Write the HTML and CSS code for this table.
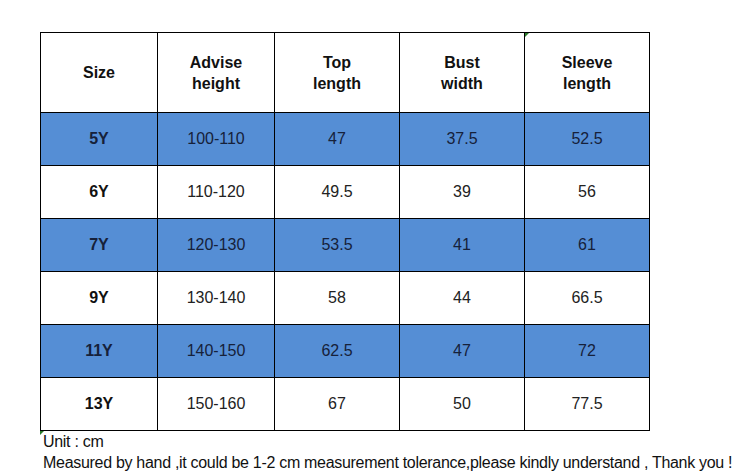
FILE: index.html
```html
<!DOCTYPE html>
<html>
<head>
<meta charset="utf-8">
<link rel="stylesheet" href="styles.css">
</head>
<body>
<div class="page">
  <table class="size-table">
    <colgroup>
      <col class="c1"><col class="c1"><col class="c2"><col class="c2"><col class="c2">
    </colgroup>
    <thead>
      <tr>
        <th>Size</th>
        <th>Advise<br>height</th>
        <th>Top<br>length</th>
        <th>Bust<br>width</th>
        <th class="mark">Sleeve<br>length</th>
      </tr>
    </thead>
    <tbody>
      <tr class="blue"><td class="sz">5Y</td><td>100-110</td><td>47</td><td>37.5</td><td>52.5</td></tr>
      <tr><td class="sz">6Y</td><td>110-120</td><td>49.5</td><td>39</td><td>56</td></tr>
      <tr class="blue"><td class="sz">7Y</td><td>120-130</td><td>53.5</td><td>41</td><td>61</td></tr>
      <tr><td class="sz">9Y</td><td>130-140</td><td>58</td><td>44</td><td>66.5</td></tr>
      <tr class="blue"><td class="sz">11Y</td><td>140-150</td><td>62.5</td><td>47</td><td>72</td></tr>
      <tr><td class="sz">13Y</td><td>150-160</td><td>67</td><td>50</td><td>77.5</td></tr>
    </tbody>
  </table>
  <div class="notes">
    <p class="unit">Unit : cm</p>
    <p>Measured by hand ,it could be 1-2 cm measurement tolerance,please kindly understand , Thank you !</p>
  </div>
</div>
</body>
</html>
```
FILE: styles.css
```css
html, body {
  margin: 0;
  padding: 0;
  background: #fff;
}
.page {
  padding: 32px 0 0 40px;
  font-family: "Liberation Sans", Arial, sans-serif;
  color: #1a1a1a;
}
.size-table {
  border-collapse: collapse;
  table-layout: fixed;
  width: 610px;
}
.c1 { width: 117px; }
.c2 { width: 125px; }
.size-table th,
.size-table td {
  border: 1px solid #000;
  text-align: center;
  vertical-align: middle;
  padding: 0;
  font-size: 16px;
}
.size-table th {
  height: 79px;
  font-weight: bold;
  line-height: 21px;
  color: #111;
}
.size-table td {
  height: 52px;
  font-weight: normal;
  color: #222;
}
.size-table td.sz {
  font-weight: bold;
  color: #111;
}
.size-table tr.blue td {
  background: #558ed5;
  color: #16213a;
}
.mark {
  position: relative;
}
.mark::before {
  content: "";
  position: absolute;
  left: 0;
  top: 0;
  border-top: 4px solid #2a7a2a;
  border-right: 4px solid transparent;
}
.notes {
  position: relative;
  padding-left: 3px;
  font-size: 16px;
  line-height: 21px;
  color: #111;
}
.notes::before {
  content: "";
  position: absolute;
  left: 0;
  top: 0;
  border-top: 4px solid #2a7a2a;
  border-right: 4px solid transparent;
}
.notes p {
  margin: 0;
  letter-spacing: -0.3px;
}
.unit {
  margin-top: 0;
}
```
